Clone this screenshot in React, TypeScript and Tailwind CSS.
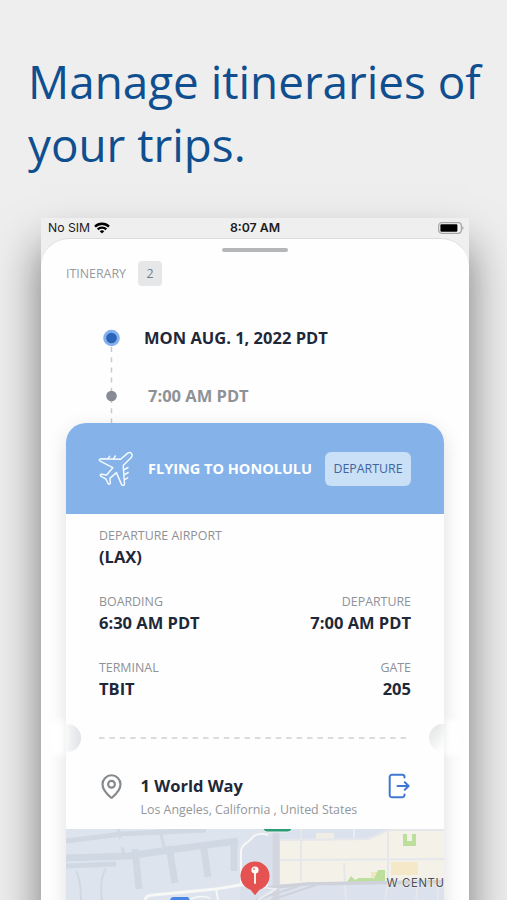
import { MapPin } from 'lucide-react';

interface Field {
  label: string;
  value: string;
}

const rows: Field[][] = [
  [{ label: 'DEPARTURE AIRPORT', value: '(LAX)' }],
  [
    { label: 'BOARDING', value: '6:30 AM PDT' },
    { label: 'DEPARTURE', value: '7:00 AM PDT' }
  ],
  [
    { label: 'TERMINAL', value: 'TBIT' },
    { label: 'GATE', value: '205' }
  ]
];

function StatusBar() {
  return (
    <div className="grid h-5 grid-cols-3 items-center pl-[7px] pr-[5px] font-['Inter',sans-serif] text-[12px] leading-5 text-[#1c1c1c]">
      <div className="flex items-center gap-1">
        <span className="text-[12.2px]">No SIM</span>
        <svg width="16" height="12" viewBox="0 0 16 12" fill="none" stroke="#000" strokeWidth="2.3">
          <path d="M1 4.6a10 10 0 0 1 14 0" />
          <path d="M3.7 7.4a6.1 6.1 0 0 1 8.6 0" />
          <path d="M8 11.6 5.7 9.3a3.3 3.3 0 0 1 4.6 0Z" fill="#000" stroke="none" />
        </svg>
      </div>
      <span className="-ml-[2px] text-center text-[12.3px] font-semibold">8:07 AM</span>
      <svg className="justify-self-end" width="26" height="12" viewBox="0 0 26 12">
        <rect x="0.7" y="0.7" width="22.6" height="10.6" rx="3" fill="#f4f4f4" stroke="#a5a5a5" strokeWidth="1.2" />
        <rect x="2.4" y="2.2" width="17" height="7.6" rx="1" fill="#000" />
        <path d="M24.5 4v4c1.2-.5 1.2-3.500 0-4Z" fill="#888" />
      </svg>
    </div>
  );
}

function PlaneIcon() {
  return (
    <svg width="36" height="37" viewBox="0 0 36 37" fill="none" stroke="#f4f9ff" strokeWidth="1.5" strokeLinejoin="round" strokeLinecap="round">
      <path d="M33.300 3.200c-1.300-1.200-3-.7-4.200.4L22.600 9.300 3 8.700c-1.800.1-2.200 1.700-.8 2.500l12.600 6.500-6.200 7.300-4.900-.8c-1.600 0-1.900 1.500-.7 2.200l4.800 2.500 2.300 4.600c.8 1.100 2.300.7 2.300-.7l-.5-4.400 6.500-5.800 5.200 12c.8 1.300 2.800.9 2.900-.7l-1.300-18.400 7.800-7.800c1.200-1.300 1.600-3.300.3-4.500Z" />
      <path d="m10 8.700 1.600-2.400M15.500 8.800l1.800-2.800M26.500 19.500l3.500-2M26.900 24.500l3.300-2M27.200 29.300l2.400-1.500" />
    </svg>
  );
}

function ExitIcon() {
  return (
    <svg className="mr-px" width="22" height="26" viewBox="0 0 22 26" fill="none" stroke="#3f78d3" strokeWidth="2" strokeLinecap="round" strokeLinejoin="round">
      <path d="M16.500 4.500V4a2.300 2.300 0 0 0-2.300-2.300H4A2.300 2.300 0 0 0 1.700 4v18A2.300 2.300 0 0 0 4 24.300h10.200A2.300 2.300 0 0 0 16.500 22v-.5" />
      <path d="M9.500 13h11M16.800 9.200l3.800 3.800-3.800 3.800" />
    </svg>
  );
}

function AirportMap() {
  return (
    <svg className="block" width="378" height="71" viewBox="0 0 378 71">
      <rect width="378" height="71" fill="#dde4ed" />

      {/* runways and aprons */}
      <g fill="none" stroke="#d0d9e3">
        <path d="M0 12 56 5 140 1" strokeWidth="5" />
        <path d="M0 29 62 27 110 20 172 12" strokeWidth="7" />
        <path d="M0 37 50 35" strokeWidth="5" />
        <path d="M69 20 73 60M103 17l6 37M137 14l5 34M168 12v30" strokeWidth="7" />
        <path d="M10 42q5 8 5 29M36 71q-3-20 4-32" strokeWidth="2" />
        <path d="M52 0 58 26M94 0l4 18" strokeWidth="3" />
      </g>
      <circle cx="59" cy="13" r="6" fill="#dde4ed" />
      <path d="M176 18 188 6H210V71H174Z" fill="#d9dfeb" />
      <path d="M210 0H378V71H200Z" fill="#dbe2ee" />

      {/* city blocks */}
      <path d="M214 12 302 10 322 0H378V53L214 55Z" fill="#f3f1e8" />
      <path d="M250 4h18v8h-18Z" fill="#f0ede5" />
      <path d="M325 33h27v13h-27Z" fill="#f5e8c8" />
      <path d="M305 43h9v9h-9Z" fill="#f0e6c0" />
      <path d="M337 5h4v7h5V5h4v12h-13Z" fill="#bddf9e" />
      <path d="M281 53l4-6 4 4 4-2h12l3 1 4-9h7v12Z" fill="#bddf9e" />

      {/* streets */}
      <g fill="none" stroke="#e6e7eb" strokeWidth="2">
        <path d="M214 31 378 30" />
        <path d="M214 11 302 10q12-5 20-9h56" />
        <path d="M235 0v52M278 34l2 37M322 0v54l-3 17M352 53l-2 18M372 53v18" />
      </g>
      <path d="M210 3v68" stroke="#d3d6df" strokeWidth="7" />
      <path d="M200 59 240 55 378 52.500" stroke="#cfd2da" strokeWidth="3.500" fill="none" />
      <path d="M190 71 236 56M205 71 250 56" stroke="#d0d3db" strokeWidth="2" />
      <path d="M288 0v9M174 56l36 4-18 11" stroke="#eef0f3" strokeWidth="1.500" fill="none" />

      {/* terminal loop */}
      <g fill="none" stroke="#f6f7f6" strokeWidth="3">
        <path d="M79 71q1-5 8-5L150 60l24-4h28" />
        <path d="M175 56V22q1-6 7-9l6-6q6-4 14-1M150 60l2 11" strokeWidth="2" />
        <path d="M122 71q12-6 22-2" strokeWidth="1.500" />
      </g>
      <path d="M104 71l1-2q1-1 3-1h14l2 3Z" fill="#4784e6" />

      <rect x="196.500" y="-8" width="30" height="11" rx="5" fill="#2d9b77" stroke="#e9f3ef" strokeWidth="1" />

      {/* location marker */}
      <path d="M189 32.500a14.500 14.500 0 0 0-4.500 28.300l4.500 5.500 4.500-5.500A14.500 14.500 0 0 0 189 32.500Z" fill="#e55252" />
      <circle cx="189" cy="41" r="3.600" fill="#fff" />
      <circle cx="188" cy="40" r="1.300" fill="#e9a0a0" />
      <path d="M189 44v10" stroke="#fff" strokeWidth="1.800" strokeLinecap="round" />

      <text x="320.500" y="58" className="font-['Inter',sans-serif] text-[11.300px] tracking-[0.65px]" fill="#4b4b50" stroke="#f2f2f2" strokeWidth="1" paintOrder="stroke">
        W CENTU
      </text>
    </svg>
  );
}

function FlightCard() {
  return (
    <div className="relative mx-[25px] h-[520px] rounded-t-[20px] bg-[#fefefe] shadow-[0_6px_20px_rgba(0,0,0,0.13)]">
      <div className="flex h-[91px] items-center rounded-t-[20px] bg-[#84b2e9] pl-8 pr-[33px]">
        <PlaneIcon />
        <span className="ml-[14px] flex-1 whitespace-nowrap pt-px text-[14.500px] font-bold text-white">FLYING TO HONOLULU</span>
        <span className="flex h-[34px] w-[86px] items-center justify-center rounded-md bg-[#c9e0f7] pt-[2px] text-[12.400px] text-[#3f64a0]">DEPARTURE</span>
      </div>

      <div className="flex flex-col gap-[23px] px-[33px] pt-3">
        {rows.map((row) => (
          <div key={row[0].label} className="flex justify-between">
            {row.map((field) => (
              <div key={field.label} className="not-first:text-right">
                <div className="text-[12.400px] leading-[19px] text-[#8e9197]">{field.label}</div>
                <div className="text-[16.500px] font-bold leading-6 text-[#1f2838]">{field.value}</div>
              </div>
            ))}
          </div>
        ))}
      </div>

      {/* ticket tear line */}
      <div className="relative mt-[23px] flex h-[28px] items-center px-[33px]">
        <div className="absolute -left-[13px] top-0 size-7 rounded-full bg-linear-to-r from-transparent from-30% to-[#dfe2e6]" />
        <div className="absolute -right-[13px] top-0 size-7 rounded-full bg-linear-to-tl from-transparent from-30% to-[#dfe2e3]" />
        <div className="absolute -left-[17px] -top-1 h-9 w-4 bg-white/90 blur-[3px]" />
        <div className="absolute -right-[17px] -top-1 h-9 w-4 bg-white/90 blur-[3px]" />
        <svg className="w-full" height="2" viewBox="0 0 312 2">
          <path d="M0 1H312" stroke="#cfcfcf" strokeWidth="1.500" strokeDasharray="5.500 4.900" />
        </svg>
      </div>

      <div className="flex h-[77px] items-start px-[33px] pt-[21px]">
        <MapPin className="-ml-[1px]" size={27} strokeWidth={1.900} color="#85888c" />
        <div className="ml-[15.500px] flex-1">
          <div className="text-[16.500px] font-bold leading-[26px] text-[#1f2838]">1 World Way</div>
          <div className="whitespace-nowrap text-[12.400px] leading-[22px] text-[#94979c]">Los Angeles, California , United States</div>
        </div>
        <ExitIcon />
      </div>
      <AirportMap />
    </div>
  );
}

export default function App() {
  return (
    <main className="h-[900px] w-[507px] overflow-hidden bg-[#eeeeee] font-['Open_Sans',sans-serif]">
      <h1 className="h-[218px] whitespace-nowrap pl-[28px] pt-[50px] text-[45.800px] leading-[63px] text-[#0f4f8f]">
        Manage itineraries of
        <br />
        your trips.
      </h1>

      <div className="ml-[41px] h-[760px] w-[428px] bg-[#efefef] shadow-[0_28px_42px_rgba(0,0,0,0.5)]">
        <StatusBar />
        <section className="h-[740px] rounded-t-[28px] border-t border-[#dcdcdc] bg-[#fefefe]">
          <div className="flex justify-center pt-[9px]">
            <div className="h-1 w-[66px] rounded-full bg-[#b4b6b8]" />
          </div>

          <div className="mt-[9px] flex items-center pl-[25px]">
            <span className="pt-px text-[12.400px] text-[#96999e]">ITINERARY</span>
            <span className="ml-3 flex h-[25px] w-6 items-center justify-center rounded bg-[#e5e7e9] pt-px text-[12.400px] text-[#787c82]">2</span>
          </div>

          <div className="flex h-[137px] pl-[62px]">
            <svg width="17" height="137" viewBox="0 0 17 137">
              <path d="M8.500 61V137" stroke="#c9cacc" strokeWidth="1.500" strokeDasharray="5 5.200" />
              <circle cx="8.500" cy="52" r="8.300" fill="#82b1ec" />
              <circle cx="8.500" cy="52" r="5.300" fill="#2b65b7" />
              <circle cx="8.500" cy="110" r="5.300" fill="#868b94" />
            </svg>
            <div className="ml-6 pt-[40px]">
              <div className="text-[16.500px] font-bold leading-6 text-[#1f2838]">MON AUG. 1, 2022 PDT</div>
              <div className="mt-[34px] pl-[4px] text-[16.500px] font-bold leading-6 text-[#8e9297]">7:00 AM PDT</div>
            </div>
          </div>

          <FlightCard />
        </section>
      </div>
    </main>
  );
}
